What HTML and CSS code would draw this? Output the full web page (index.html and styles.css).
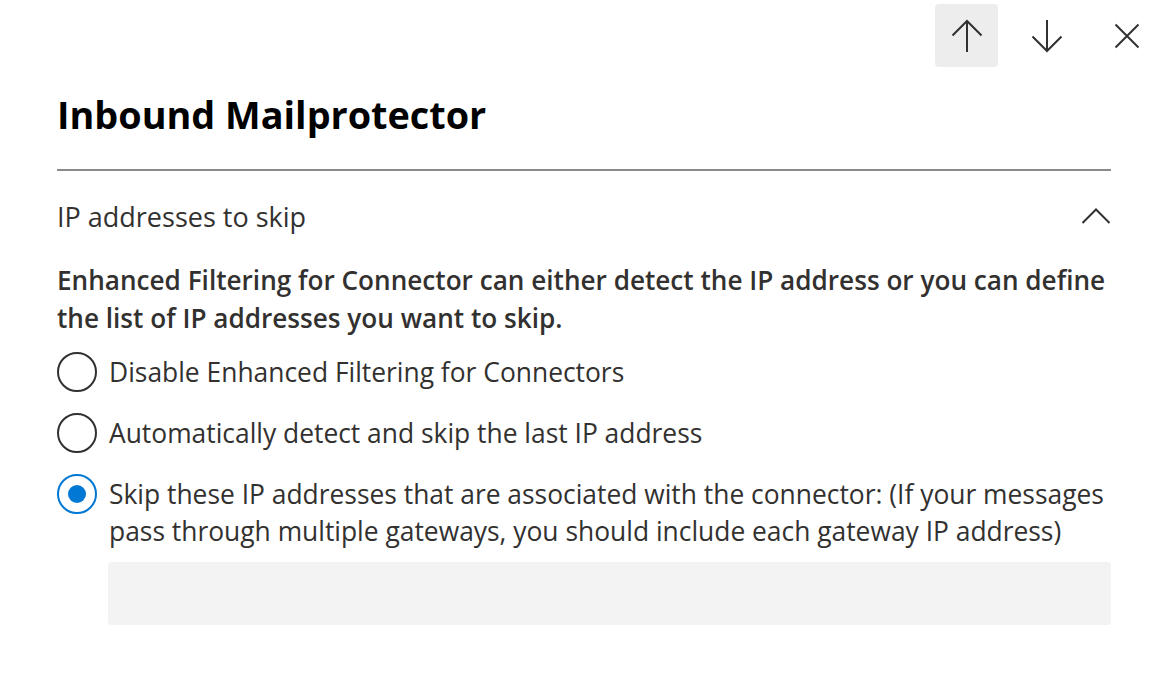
FILE: index.html
```html
<!DOCTYPE html>
<html lang="en">
<head>
<meta charset="utf-8">
<title>Inbound Mailprotector</title>
<link rel="stylesheet" href="styles.css">
</head>
<body>
<div class="panel">
  <div class="toolbar">
    <button class="icon-btn active" aria-label="Previous">
      <svg width="32" height="34" viewBox="0 0 32 34"><path d="M16 33V2M1.5 16.5L16 2l14.5 14.5" fill="none" stroke="#323130" stroke-width="2"/></svg>
    </button>
    <button class="icon-btn" aria-label="Next">
      <svg width="32" height="34" viewBox="0 0 32 34"><path d="M16 1v31M1.5 17.5L16 32l14.5-14.5" fill="none" stroke="#323130" stroke-width="2"/></svg>
    </button>
    <button class="icon-btn" aria-label="Close">
      <svg width="26" height="26" viewBox="0 0 26 26"><path d="M1.5 1.5l23 23M24.5 1.5l-23 23" fill="none" stroke="#323130" stroke-width="2"/></svg>
    </button>
  </div>
  <h1 class="title">Inbound Mailprotector</h1>
  <hr class="divider">
  <div class="section-head">
    <span class="section-title">IP addresses to skip</span>
    <svg class="chevron" width="30" height="16" viewBox="0 0 30 16"><path d="M1.5 15L15 1.5 28.5 15" fill="none" stroke="#323130" stroke-width="2"/></svg>
  </div>
  <p class="desc">Enhanced Filtering for Connector can either detect the IP address or you can define the list of IP addresses you want to skip.</p>
  <div class="options">
    <label class="option">
      <span class="radio"></span>
      <span class="label">Disable Enhanced Filtering for Connectors</span>
    </label>
    <label class="option">
      <span class="radio"></span>
      <span class="label">Automatically detect and skip the last IP address</span>
    </label>
    <label class="option">
      <span class="radio checked"></span>
      <span class="label">Skip these IP addresses that are associated with the connector: (If your messages pass through multiple gateways, you should include each gateway IP address)</span>
    </label>
  </div>
  <div class="input-box"></div>
</div>
</body>
</html>
```
FILE: styles.css
```css
* { box-sizing: border-box; }
html, body { margin: 0; padding: 0; background: #fff; }
body {
  font-family: "Open Sans", "Noto Sans", sans-serif;
  color: #323130;
}
.panel {
  padding: 4px 47px 0 57px;
}
.toolbar {
  display: flex;
  justify-content: flex-end;
  margin-right: -47px;
  gap: 17px;
}
.icon-btn {
  width: 63px;
  height: 63px;
  border: 0;
  background: transparent;
  border-radius: 4px;
  display: flex;
  align-items: center;
  justify-content: center;
  padding: 0;
}
.icon-btn.active { background: #ededed; }
.title {
  margin: 24px 0 0;
  font-size: 37.8px;
  font-weight: 700;
  color: #000;
  line-height: 48px;
}
.divider {
  border: 0;
  border-top: 2px solid #8a8a8a;
  margin: 30px 0 0;
}
.section-head {
  display: flex;
  justify-content: space-between;
  align-items: center;
  height: 90px;
}
.section-title { font-size: 27px; }
.desc {
  margin: 0;
  font-size: 26.15px;
  font-weight: 600;
  line-height: 38px;
}
.options {
  display: flex;
  flex-direction: column;
  gap: 23px;
  margin-top: 17px;
}
.option {
  display: flex;
  align-items: flex-start;
  gap: 12px;
  font-size: 26.4px;
  line-height: 37px;
}
.radio {
  flex: none;
  width: 40px;
  height: 40px;
  border-radius: 50%;
  border: 2px solid #323130;
  margin-top: -2px;
  display: flex;
  align-items: center;
  justify-content: center;
}
.radio.checked { border-color: #0078d4; }
.radio.checked::after {
  content: "";
  width: 18px;
  height: 18px;
  border-radius: 50%;
  background: #0078d4;
}
.input-box {
  margin: 12px 0 0 51px;
  height: 63px;
  background: #f3f3f3;
  border-radius: 3px;
}
```
